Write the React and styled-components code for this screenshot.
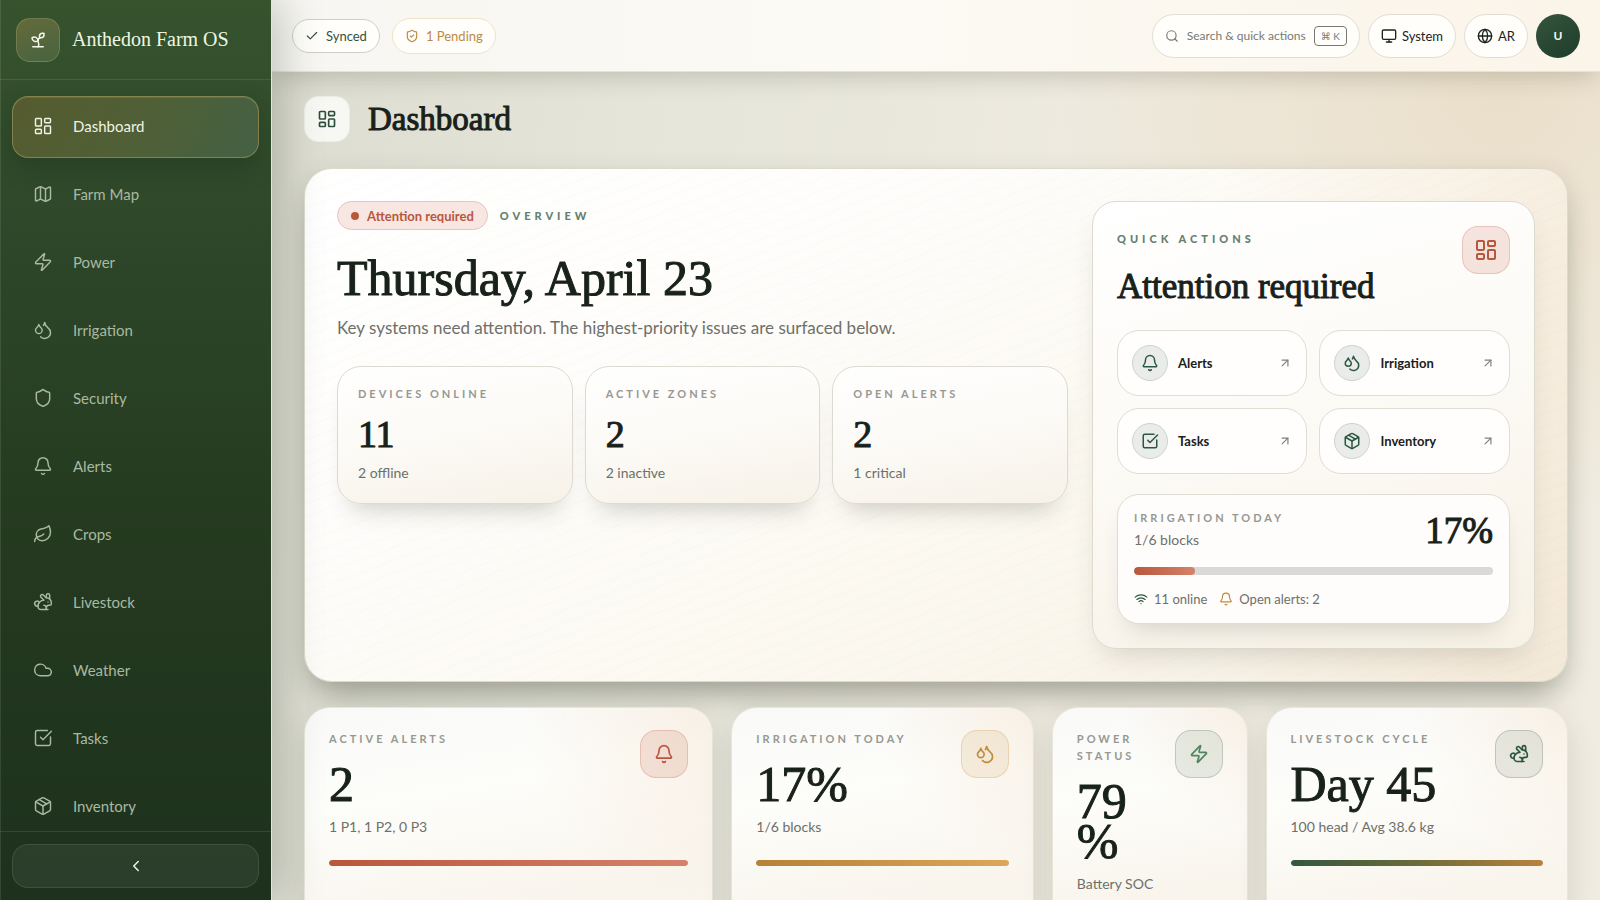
import React, { useState } from 'react';
import styled, { createGlobalStyle, css } from 'styled-components';
import {
  ArrowUpRight, Bell, Check, ChevronLeft, Cloud, Droplets, Globe, LayoutDashboard, Leaf, Map,
  Monitor, Package, Rabbit, Search, Shield, ShieldCheck, Sprout, SquareCheckBig, Wifi, Zap,
} from 'lucide-react';

const GlobalStyle = createGlobalStyle`
  * {
    box-sizing: border-box;
  }
  body {
    margin: 0;
    font-family: Lato, "Liberation Sans", sans-serif;
    color: #1a211b;
  }
  h1, h2, p {
    margin: 0;
  }
  button {
    font-family: inherit;
    cursor: pointer;
  }
  a {
    color: inherit;
    text-decoration: none;
  }
`;

const Serif = css`
  font-family: "Liberation Serif", serif;
  font-weight: 400;
  color: #18211a;
`;

const Caps = css`
  font-size: 11px;
  line-height: 17px;
  font-weight: 700;
  letter-spacing: 3px;
  text-transform: uppercase;
  color: #969892;
`;

const toneColors = {
  red: { icon: '#b9573c', tint: 'rgba(190, 80, 55, 0.14)', edge: 'rgba(190, 80, 55, 0.22)', bar: '#b9573c, #d5826a' },
  amber: { icon: '#c08a3a', tint: 'rgba(200, 145, 65, 0.13)', edge: 'rgba(200, 145, 65, 0.26)', bar: '#b58238, #dda65a' },
  green: { icon: '#4f8560', tint: 'rgba(60, 110, 75, 0.11)', edge: 'rgba(60, 100, 75, 0.24)', bar: '#34573f, #5a9169' },
  forest: { icon: '#2c5740', tint: 'rgba(45, 80, 60, 0.1)', edge: 'rgba(45, 80, 60, 0.22)', bar: '#34573f, #6b6c3b, #b9833c' },
};

const Shell = styled.div`
  display: flex;
  height: 100vh;
  overflow: hidden;
  background:
    radial-gradient(circle at 94% 10%, rgba(226, 200, 160, 0.35), transparent 26%),
    linear-gradient(100deg, #dcdcd0 16%, #e5e5da 38%, #eeeadf 64%, #f0ece1 100%);
`;

const Sidebar = styled.aside`
  display: flex;
  flex-direction: column;
  flex: 0 0 272px;
  z-index: 2;
  color: #a9b9a2;
  background: linear-gradient(180deg, #36532e 0%, #2c4528 30%, #24391f 62%, #1d311d 100%);
  border-right: 1px solid #e4e6d4;
  box-shadow: 8px 0 40px rgba(40, 50, 35, 0.26), inset 1px 0 0 rgba(255, 255, 255, 0.1);
`;

const Brand = styled.div`
  display: flex;
  align-items: center;
  gap: 12px;
  height: 80px;
  padding: 0 16px;
  border-bottom: 1px solid rgba(255, 255, 255, 0.1);
`;

const BrandMark = styled.span`
  display: grid;
  place-items: center;
  width: 44px;
  height: 44px;
  border-radius: 14px;
  border: 1px solid rgba(190, 175, 110, 0.3);
  background: linear-gradient(160deg, #656a3b, #46643f);
  color: #f4f7ea;
`;

const BrandName = styled.span`
  ${Serif}
  font-size: 20px;
  color: #f0f5e2;
`;

const Nav = styled.nav`
  display: flex;
  flex-direction: column;
  flex: 1;
  gap: 6px;
  min-height: 0;
  padding: 16px 12px 0;
  overflow-y: auto;
  scrollbar-width: none;
`;

const NavLink = styled.a`
  display: flex;
  align-items: center;
  flex: 0 0 62px;
  gap: 20px;
  padding: 0 20px 2px;
  border: 1px solid transparent;
  border-radius: 16px;
  font-size: 15px;
  ${(props) => props.$active && css`
    color: #f0f4e4;
    border-color: rgba(175, 160, 95, 0.55);
    background: linear-gradient(120deg, #565b2f, #4f6037 55%, #446044);
    box-shadow: 0 10px 24px rgba(15, 30, 15, 0.25), inset 0 1px 0 rgba(255, 255, 255, 0.1);
  `}
`;

const SidebarFoot = styled.div`
  padding: 12px;
  border-top: 1px solid rgba(255, 255, 255, 0.1);
`;

const CollapseButton = styled.button`
  display: grid;
  place-items: center;
  width: 100%;
  height: 44px;
  border-radius: 16px;
  border: 1px solid rgba(255, 255, 255, 0.1);
  background: rgba(255, 255, 255, 0.06);
  color: #f0f4e8;
`;

const Page = styled.div`
  display: flex;
  flex-direction: column;
  flex: 1;
  min-width: 0;
`;

const Topbar = styled.header`
  display: flex;
  align-items: center;
  justify-content: space-between;
  flex: 0 0 72px;
  padding: 0 20px;
  z-index: 1;
  border-bottom: 1px solid #e6e2d5;
  background: linear-gradient(90deg, #f7f6f2, #fcfaf4 45%, #fbf4e9);
  box-shadow: 0 8px 24px -4px rgba(50, 50, 30, 0.22);
`;

const TopGroup = styled.div`
  display: flex;
  align-items: center;
  gap: ${(props) => props.$gap}px;
`;

const StatusPill = styled.span`
  display: flex;
  align-items: center;
  gap: 7px;
  height: ${(props) => (props.$warn ? 36 : 34)}px;
  padding: 0 12px;
  border-radius: 18px;
  border: 1px solid ${(props) => (props.$warn ? '#efe3c8' : '#cdd1c9')};
  background: #fffefb;
  color: ${(props) => (props.$warn ? '#b98a45' : '#35503f')};
  font-size: 13px;
`;

const TopButton = styled.button`
  display: flex;
  align-items: center;
  gap: 5px;
  height: 44px;
  padding: 0 12px;
  border-radius: 22px;
  border: 1px solid #e0ded4;
  background: #fffefb;
  color: #1b231d;
  font-size: 13px;
  ${(props) => props.$muted && css`
    gap: 8px;
    color: #777a74;
    font-size: 12px;
  `}
`;

const Shortcut = styled.kbd`
  padding: 1px 6px;
  border: 1px solid #777a74;
  border-radius: 4px;
  font-family: Lato, "DejaVu Sans", sans-serif;
  font-size: 10px;
  line-height: 16px;
`;

const Avatar = styled.button`
  width: 44px;
  height: 44px;
  padding: 0;
  border: 0;
  border-radius: 50%;
  background: linear-gradient(150deg, #35553d, #1e3c2a);
  color: #f3f6ee;
  font-size: 12px;
  font-weight: 700;
`;

const Content = styled.main`
  flex: 1;
  min-height: 0;
  padding: 24px 32px;
  overflow: hidden;
`;

const PageHead = styled.div`
  display: flex;
  align-items: center;
  gap: 18px;
  margin-bottom: 26px;
`;

const PageIcon = styled.span`
  display: grid;
  place-items: center;
  width: 46px;
  height: 46px;
  border-radius: 14px;
  border: 1px solid #eceee8;
  background: #f7f8f4;
  color: #2d4f3a;
`;

const PageTitle = styled.h1`
  ${Serif}
  font-size: 33px;
  line-height: 40px;
  -webkit-text-stroke: 1px;
`;

const Hero = styled.section`
  display: grid;
  grid-template-columns: minmax(0, 165fr) minmax(0, 100fr);
  gap: 24px;
  padding: 32px;
  border: 1px solid #dcdacd;
  border-radius: 28px;
  background:
    repeating-linear-gradient(159deg, rgba(90, 90, 60, 0.013) 0 2px, transparent 2px 12px),
    linear-gradient(90deg, transparent 72%, rgba(240, 222, 200, 0.4) 100%),
    linear-gradient(150deg, #ffffff 0%, #fefdfb 30%, #fcf9f1 58%, #f6f0e3 100%);
  box-shadow: 0 22px 32px -12px rgba(50, 55, 40, 0.36), 0 6px 24px rgba(50, 55, 40, 0.12);
`;

const HeroTags = styled.div`
  display: flex;
  align-items: center;
  gap: 12px;
`;

const AlertChip = styled.span`
  display: flex;
  align-items: center;
  gap: 8px;
  height: 29px;
  padding: 0 13px;
  border-radius: 15px;
  border: 1px solid #e6c5bc;
  background: #f7e6e2;
  color: #b9573c;
  font-size: 13px;
  font-weight: 700;

  &::before {
    content: "";
    width: 8px;
    height: 8px;
    border-radius: 50%;
    background: #b9573c;
  }
`;

const Eyebrow = styled.span`
  ${Caps}
  letter-spacing: 4px;
  font-weight: 900;
  color: #65806e;
`;

const HeroTitle = styled.h2`
  ${Serif}
  margin-top: 20px;
  font-size: 50px;
  line-height: 56px;
  -webkit-text-stroke: 1px;
`;

const HeroText = styled.p`
  margin-top: 10px;
  font-size: 17px;
  line-height: 24px;
  color: #6d706a;
`;

const StatGrid = styled.div`
  display: grid;
  grid-template-columns: repeat(3, minmax(0, 1fr));
  gap: 12px;
  margin-top: 26px;
`;

const StatCard = styled.div`
  display: flex;
  flex-direction: column;
  padding: 18px 20px 20px;
  border: 1px solid #dddad1;
  border-radius: 24px;
  background: linear-gradient(170deg, #ffffff 0%, #fcfaf6 50%, #f7f2e8 100%);
  box-shadow: 0 18px 24px -14px rgba(50, 55, 40, 0.25);
`;

const Label = styled.span`
  ${Caps}
`;

const StatValue = styled.span`
  ${Serif}
  margin: 11px 0 8px;
  font-size: 38px;
  line-height: 42px;
  -webkit-text-stroke: 1px;
`;

const Note = styled.span`
  font-size: 14px;
  line-height: 20px;
  color: #6d706a;
  white-space: nowrap;
`;

const QuickPanel = styled.section`
  display: flex;
  flex-direction: column;
  padding: 24px;
  border: 1px solid #dddacf;
  border-radius: 24px;
  background: linear-gradient(165deg, #ffffff 0%, #fcfaf5 50%, #f7f1e5 100%);
  box-shadow: 0 14px 30px -12px rgba(60, 55, 35, 0.22);
`;

const SplitRow = styled.div`
  display: flex;
  align-items: flex-start;
  justify-content: space-between;
  gap: 16px;
`;

const TextColumn = styled.div`
  display: flex;
  flex-direction: column;
  gap: ${(props) => props.$gap || 0}px;
  min-width: 0;
`;

const QuickHead = styled(TextColumn)`
  padding-top: 4px;
`;

const QuickTitle = styled.h2`
  ${Serif}
  font-size: 35px;
  line-height: 40px;
  -webkit-text-stroke: 1px;
`;

const IconTile = styled.span`
  display: grid;
  place-items: center;
  flex: 0 0 48px;
  height: 48px;
  border-radius: 16px;
  border: 1px solid ${(props) => toneColors[props.$tone].edge};
  background: ${(props) => toneColors[props.$tone].tint};
  color: ${(props) => toneColors[props.$tone].icon};
`;

const ActionGrid = styled.div`
  display: grid;
  grid-template-columns: repeat(2, minmax(0, 1fr));
  gap: 12px;
  margin: 23px 0 20px;
`;

const ActionLink = styled.a`
  display: flex;
  align-items: center;
  gap: 10px;
  height: 66px;
  padding: 0 14px;
  border: 1px solid #dfddd4;
  border-radius: 22px;
  background: #fffefc;
  font-size: 13px;
  font-weight: 700;

  & > :last-child {
    margin: 0 0 0 auto;
    color: #7c807a;
  }
`;

const ActionIcon = styled.span`
  display: grid;
  place-items: center;
  width: 36px;
  height: 36px;
  border-radius: 50%;
  border: 1px solid #cdd3cd;
  background: #e9ecea;
  color: #2d5740;
`;

const ProgressCard = styled.div`
  padding: 14px 16px;
  border: 1px solid #dfddd4;
  border-radius: 22px;
  background: #fefdfb;
  box-shadow: 0 14px 24px -12px rgba(50, 55, 40, 0.22);
`;

const ProgressValue = styled.span`
  ${Serif}
  font-size: 37px;
  line-height: 44px;
  -webkit-text-stroke: 1px;
`;

const Track = styled.div`
  height: ${(props) => props.$height}px;
  margin-top: ${(props) => props.$top}px;
  border-radius: 4px;
  overflow: hidden;
  background: #d9dad7;
`;

const Fill = styled.div`
  height: 100%;
  border-radius: 4px;
  background: linear-gradient(90deg, ${(props) => toneColors[props.$tone].bar});
`;

const MetaRow = styled.div`
  display: flex;
  align-items: center;
  gap: 12px;
  margin-top: 14px;
`;

const Meta = styled.span`
  display: flex;
  align-items: center;
  gap: 6px;
  font-size: 13px;
  line-height: 20px;
  color: #6d706a;

  & svg {
    color: ${(props) => toneColors[props.$tone].icon};
  }
`;

const KpiGrid = styled.section`
  display: grid;
  grid-template-columns: repeat(12, minmax(0, 1fr));
  gap: 18px;
  margin-top: 25px;
`;

const KpiCard = styled.article`
  grid-column: span ${(props) => props.$span};
  min-height: 240px;
  padding: 22px 24px;
  border: 1px solid #e8e5da;
  border-radius: 26px;
  background:
    radial-gradient(circle at 100% 0%, rgba(245, 230, 212, 0.55), transparent 40%),
    linear-gradient(170deg, #f9f9f8 0%, #fdfdfa 35%, #f9f5ed 75%);
  box-shadow: 0 12px 30px rgba(50, 55, 40, 0.14);
`;

const KpiValue = styled.span`
  ${Serif}
  margin: 17px 0 13px;
  font-size: 50px;
  line-height: 40px;
  overflow-wrap: anywhere;
  -webkit-text-stroke: 1px;
`;

const navItems = [
  { label: 'Dashboard', icon: LayoutDashboard },
  { label: 'Farm Map', icon: Map },
  { label: 'Power', icon: Zap },
  { label: 'Irrigation', icon: Droplets },
  { label: 'Security', icon: Shield },
  { label: 'Alerts', icon: Bell },
  { label: 'Crops', icon: Leaf },
  { label: 'Livestock', icon: Rabbit },
  { label: 'Weather', icon: Cloud },
  { label: 'Tasks', icon: SquareCheckBig },
  { label: 'Inventory', icon: Package },
];

const stats = [
  { label: 'Devices online', value: '11', note: '2 offline' },
  { label: 'Active zones', value: '2', note: '2 inactive' },
  { label: 'Open alerts', value: '2', note: '1 critical' },
];

const actions = [
  { label: 'Alerts', icon: Bell },
  { label: 'Irrigation', icon: Droplets },
  { label: 'Tasks', icon: SquareCheckBig },
  { label: 'Inventory', icon: Package },
];

const kpis = [
  { label: 'Active alerts', value: '2', note: '1 P1, 1 P2, 0 P3', icon: Bell, tone: 'red', span: 4 },
  { label: 'Irrigation today', value: '17%', note: '1/6 blocks', icon: Droplets, tone: 'amber', span: 3 },
  { label: 'Power status', value: '79%', note: 'Battery SOC', icon: Zap, tone: 'green', span: 2 },
  { label: 'Livestock cycle', value: 'Day 45', note: '100 head / Avg 38.6 kg', icon: Rabbit, tone: 'forest', span: 3 },
];

function Kpi({ kpi }) {
  const Icon = kpi.icon;
  return (
    <KpiCard $span={kpi.span}>
      <SplitRow>
        <TextColumn>
          <Label>{kpi.label}</Label>
          <KpiValue>{kpi.value}</KpiValue>
          <Note>{kpi.note}</Note>
        </TextColumn>
        <IconTile $tone={kpi.tone}><Icon size={20} /></IconTile>
      </SplitRow>
      <Track $height={6} $top={23}><Fill $tone={kpi.tone} /></Track>
    </KpiCard>
  );
}

export default function App() {
  const [active, setActive] = useState('Dashboard');
  const irrigation = 17;

  const handleNavClick = (e, label) => {
    e.preventDefault();
    setActive(label);
  };

  return (
    <Shell>
      <GlobalStyle />
      <Sidebar>
        <Brand>
          <BrandMark><Sprout size={18} /></BrandMark>
          <BrandName>Anthedon Farm OS</BrandName>
        </Brand>
        <Nav>
          {navItems.map(({ label, icon: Icon }) => (
            <NavLink key={label} href="#" $active={label === active} onClick={(e) => handleNavClick(e, label)}>
              <Icon size={20} strokeWidth={1.75} />
              {label}
            </NavLink>
          ))}
        </Nav>
        <SidebarFoot>
          <CollapseButton aria-label="Collapse sidebar"><ChevronLeft size={18} /></CollapseButton>
        </SidebarFoot>
      </Sidebar>
      <Page>
        <Topbar>
          <TopGroup $gap={12}>
            <StatusPill>
              <Check size={14} />
              Synced
            </StatusPill>
            <StatusPill $warn>
              <ShieldCheck size={14} />
              1 Pending
            </StatusPill>
          </TopGroup>
          <TopGroup $gap={8}>
            <TopButton $muted>
              <Search size={14} />
              Search &amp; quick actions
              <Shortcut>⌘ K</Shortcut>
            </TopButton>
            <TopButton>
              <Monitor size={16} />
              System
            </TopButton>
            <TopButton>
              <Globe size={16} />
              AR
            </TopButton>
            <Avatar>U</Avatar>
          </TopGroup>
        </Topbar>
        <Content>
          <PageHead>
            <PageIcon><LayoutDashboard size={20} /></PageIcon>
            <PageTitle>Dashboard</PageTitle>
          </PageHead>
          <Hero>
            <div>
              <HeroTags>
                <AlertChip>Attention required</AlertChip>
                <Eyebrow>Overview</Eyebrow>
              </HeroTags>
              <HeroTitle>Thursday, April 23</HeroTitle>
              <HeroText>Key systems need attention. The highest-priority issues are surfaced below.</HeroText>
              <StatGrid>
                {stats.map((stat) => (
                  <StatCard key={stat.label}>
                    <Label>{stat.label}</Label>
                    <StatValue>{stat.value}</StatValue>
                    <Note>{stat.note}</Note>
                  </StatCard>
                ))}
              </StatGrid>
            </div>
            <QuickPanel>
              <SplitRow>
                <QuickHead $gap={20}>
                  <Eyebrow>Quick actions</Eyebrow>
                  <QuickTitle>Attention required</QuickTitle>
                </QuickHead>
                <IconTile $tone="red"><LayoutDashboard size={24} /></IconTile>
              </SplitRow>
              <ActionGrid>
                {actions.map(({ label, icon: Icon }) => (
                  <ActionLink key={label} href="#">
                    <ActionIcon><Icon size={18} /></ActionIcon>
                    {label}
                    <ArrowUpRight size={14} />
                  </ActionLink>
                ))}
              </ActionGrid>
              <ProgressCard>
                <SplitRow>
                  <TextColumn $gap={4}>
                    <Label>Irrigation today</Label>
                    <Note>1/6 blocks</Note>
                  </TextColumn>
                  <ProgressValue>{`${irrigation}%`}</ProgressValue>
                </SplitRow>
                <Track $height={8} $top={14}>
                  <Fill $tone="red" style={{ width: `${irrigation}%` }} />
                </Track>
                <MetaRow>
                  <Meta $tone="forest">
                    <Wifi size={14} />
                    11 online
                  </Meta>
                  <Meta $tone="amber">
                    <Bell size={14} />
                    Open alerts: 2
                  </Meta>
                </MetaRow>
              </ProgressCard>
            </QuickPanel>
          </Hero>
          <KpiGrid>
            {kpis.map((kpi) => <Kpi key={kpi.label} kpi={kpi} />)}
          </KpiGrid>
        </Content>
      </Page>
    </Shell>
  );
}
